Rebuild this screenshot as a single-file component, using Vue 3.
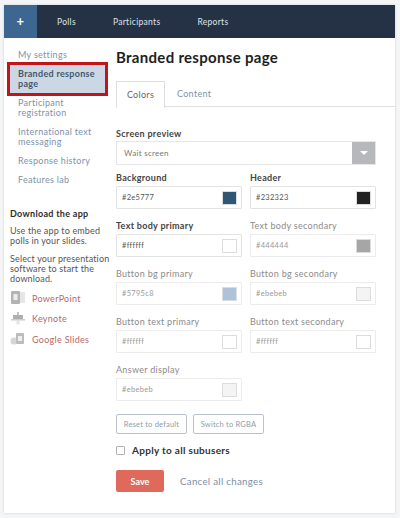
<script setup>
const navItems = ['Polls', 'Participants', 'Reports']

const settingsLinks = [
  { label: 'My settings' },
  { label: 'Branded response page', active: true },
  { label: 'Participant registration' },
  { label: 'International text messaging' },
  { label: 'Response history' },
  { label: 'Features lab' }
]

const downloads = ['PowerPoint', 'Keynote', 'Google Slides']

const colorFields = [
  { label: 'Background', value: '#2e5777', swatch: '#2e5777' },
  { label: 'Header', value: '#232323', swatch: '#232323' },
  { label: 'Text body primary', value: '#ffffff', swatch: '#ffffff' },
  { label: 'Text body secondary', value: '#444444', swatch: '#a6a6a6', muted: true },
  { label: 'Button bg primary', value: '#5795c8', swatch: '#adc3dc', muted: true },
  { label: 'Button bg secondary', value: '#ebebeb', swatch: '#f4f4f4', muted: true },
  { label: 'Button text primary', value: '#ffffff', swatch: '#ffffff', muted: true },
  { label: 'Button text secondary', value: '#ffffff', swatch: '#ffffff', muted: true },
  { label: 'Answer display', value: '#ebebeb', swatch: '#f4f4f4', muted: true }
]
</script>

<template>
  <div class="page">
    <div class="card">
      <nav class="topbar">
        <div class="plus">+</div>
        <a v-for="item in navItems" :key="item" class="nav-link">{{ item }}</a>
      </nav>

      <div class="body">
        <aside class="side">
          <ul class="side-links">
            <li
              v-for="link in settingsLinks"
              :key="link.label"
              :class="['side-link', { active: link.active }]"
            >{{ link.label }}</li>
          </ul>

          <div class="download-box">
            <h4 class="side-title">Download the app</h4>
            <p class="side-text">Use the app to embed<br />polls in your slides.</p>
            <p class="side-text">Select your presentation<br />software to start the<br />download.</p>

            <div class="downloads">
              <div v-for="(name, i) in downloads" :key="name" class="download">
                <svg class="dl-icon" width="16" height="14" viewBox="0 0 16 14">
                  <template v-if="i === 0">
                    <rect x="6" y="1" width="9" height="11" fill="#e6e6e6" />
                    <rect x="1" y="0" width="9" height="13" rx="1" fill="#b4b4b4" />
                    <rect x="3.5" y="3" width="4" height="6" fill="#eeeeee" />
                  </template>
                  <template v-else-if="i === 1">
                    <rect x="3" y="3" width="10" height="4" fill="#b0b0b0" />
                    <rect x="7" y="0" width="2" height="3" fill="#c4c4c4" />
                    <rect x="1" y="7" width="14" height="1.5" fill="#cccccc" />
                    <rect x="6.5" y="8.5" width="3" height="4" fill="#e2e2e2" />
                  </template>
                  <template v-else>
                    <circle cx="4" cy="9" r="3.5" fill="#d6d6d6" />
                    <rect x="6" y="1" width="8" height="11" rx="1" fill="#bcbcbc" />
                    <rect x="8" y="4" width="4" height="5" fill="#efefef" />
                  </template>
                </svg>
                <a class="dl-link">{{ name }}</a>
              </div>
            </div>
          </div>
        </aside>

        <main class="main">
          <h1 class="title">Branded response page</h1>

          <div class="tabs">
            <div class="tab current">Colors</div>
            <div class="tab">Content</div>
          </div>

          <div class="form">
            <label class="label preview-label">Screen preview</label>
            <div class="select">
              <span class="select-text">Wait screen</span>
              <span class="select-arrow"><i></i></span>
            </div>

            <div class="fields">
              <div
                v-for="field in colorFields"
                :key="field.label"
                :class="['field', { muted: field.muted }]"
              >
                <label class="label">{{ field.label }}</label>
                <div class="input">
                  <span class="value">{{ field.value }}</span>
                  <span class="swatch" :style="{ background: field.swatch }"></span>
                </div>
              </div>
            </div>

            <div class="small-btns">
              <button class="ghost">Reset to default</button>
              <button class="ghost">Switch to RGBA</button>
            </div>

            <div class="apply">
              <span class="check"></span>
              <span>Apply to all subusers</span>
            </div>

            <div class="actions">
              <button class="save">Save</button>
              <a class="cancel">Cancel all changes</a>
            </div>
          </div>
        </main>
      </div>
    </div>
  </div>
</template>

<style>
html, body { background: #f4f5f6; }
</style>

<style scoped>
.page {
  width: 400px;
  height: 518px;
  box-sizing: border-box;
  padding: 5px 5px 5px 4px;
  font-family: Lato, "Open Sans", sans-serif;
  letter-spacing: 0.3px;
  overflow: hidden;
}
.card {
  height: 508px;
  background: #fff;
  box-shadow: 0 0 2px #c9c9c9;
}
.topbar {
  display: flex;
  align-items: center;
  height: 33px;
  background: #253245;
}
.plus {
  width: 33px;
  height: 33px;
  background: #3d6690;
  color: #fff;
  font-weight: 700;
  font-size: 13px;
  line-height: 32px;
  text-align: center;
}
.nav-link {
  color: #dfe3e8;
  font-size: 8.5px;
  font-weight: 400;
}
.nav-link:nth-child(2) { margin-left: 20px; }
.nav-link:nth-child(3) { margin-left: 37px; }
.nav-link:nth-child(4) { margin-left: 37px; }

.body { display: flex; }
.side {
  width: 112px;
  flex: none;
  padding: 12px 0 0 14px;
  box-sizing: border-box;
}
.side-links {
  list-style: none;
  margin: 0;
  padding: 0;
}
.side-link {
  font-size: 9px;
  line-height: 10px;
  color: #7d93ab;
  margin-bottom: 9px;
  width: 80px;
}
.side-link:first-child { margin-bottom: 2px; }
.side-link.active {
  width: 101px;
  box-sizing: border-box;
  margin: 0 0 2px -11px;
  height: 34px;
  background: #cbd7e4;
  border: 3px solid #c0151b;
  font-weight: 700;
  color: #46576a;
  padding: 4px 6px 0 8px;
}
.download-box { margin-left: -8px; }
.side-title {
  margin: 23px 0 7px;
  font-size: 9px;
  line-height: 11px;
  font-weight: 700;
  color: #2d2d2d;
}
.side-text {
  margin: 0 0 8px;
  white-space: nowrap;
  font-size: 9px;
  letter-spacing: 0.15px;
  line-height: 10px;
  color: #555;
}
.downloads { margin-top: -4px; }
.download {
  display: flex;
  align-items: center;
  height: 20.5px;
}
.dl-icon { flex: none; width: 16px; }
.dl-link {
  margin-left: 6px;
  font-size: 9px;
  color: #b4686c;
}

.main {
  flex: 1;
  min-width: 0;
}
.title {
  margin: 9px 0 14px;
  font-size: 15px;
  line-height: 20px;
  font-weight: 700;
  color: #1e1e1e;
  letter-spacing: 0.3px;
}
.tabs {
  display: flex;
  height: 25px;
  border-bottom: 1.5px solid #dedede;
}
.tab {
  font-size: 9px;
  color: #7d93ab;
  line-height: 26px;
  padding: 0 12px;
}
.tab.current {
  width: 49px;
  box-sizing: border-box;
  height: 26.5px;
  text-align: center;
  padding: 0;
  background: #fff;
  color: #666;
  border: 1px solid #dedede;
  border-bottom: 0;
}
.form { width: 260px; padding-top: 21px; }
.label {
  display: block;
  font-size: 9px;
  line-height: 11px;
  font-weight: 700;
  color: #444;
  margin-bottom: 3px;
}
.preview-label { margin-bottom: 2px; }
.select {
  display: flex;
  height: 24px;
  box-sizing: border-box;
  border: 1px solid #e6e6e6;
  align-items: center;
}
.select-text {
  flex: 1;
  padding-left: 7px;
  font-size: 8px;
  color: #777;
}
.select-arrow {
  width: 23px;
  height: 22px;
  background: #b6b8bc;
  display: flex;
  align-items: center;
  justify-content: center;
}
.select-arrow i {
  border-left: 4px solid transparent;
  border-right: 4px solid transparent;
  border-top: 4px solid #fff;
}
.fields {
  display: grid;
  grid-template-columns: 126px 126px;
  column-gap: 8px;
  row-gap: 11px;
  margin-top: 7px;
}
.field.muted .label { color: #8b8b8b; font-weight: 400; }
.field.muted .value { color: #9a9a9a; }
.field.muted .input { border-color: #ececec; }
.input {
  display: flex;
  align-items: center;
  justify-content: space-between;
  height: 23px;
  box-sizing: border-box;
  border: 1px solid #e2e2e2;
  border-radius: 1px;
  padding: 0 4px 0 5px;
}
.value {
  font-size: 7.5px;
  color: #555;
}
.swatch {
  width: 15px;
  height: 14px;
  box-sizing: border-box;
  border: 1px solid #dcdcdc;
}
.small-btns {
  display: flex;
  gap: 6px;
  margin-top: 13px;
}
.ghost {
  width: 71px;
  height: 20px;
  padding: 0;
  background: #fff;
  border: 1px solid #b9c2cd;
  border-radius: 2px;
  font-family: inherit;
  font-size: 7.5px;
  letter-spacing: 0.2px;
  color: #8e9cab;
}
.apply {
  display: flex;
  align-items: center;
  gap: 7px;
  margin-top: 10px;
  font-size: 10px;
  line-height: 12px;
  font-weight: 700;
  color: #333;
}
.check {
  width: 7px;
  height: 7px;
  border: 1px solid #b5b5b5;
  border-radius: 1px;
}
.actions {
  display: flex;
  align-items: center;
  gap: 16px;
  margin-top: 14px;
}
.save {
  width: 48px;
  height: 22px;
  padding: 0;
  border: 0;
  border-radius: 2px;
  background: #df6a5b;
  color: #fff;
  font-family: inherit;
  font-size: 9px;
  font-weight: 700;
}
.cancel {
  font-size: 9.7px;
  color: #7a8fa6;
}
</style>
